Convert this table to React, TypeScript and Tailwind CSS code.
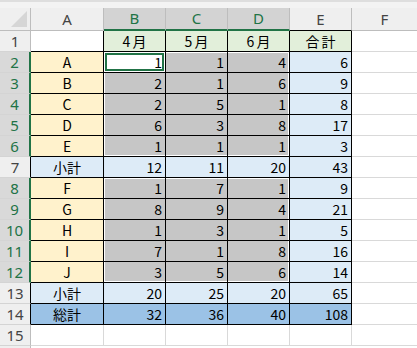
import React from "react";

const cols = ["A", "B", "C", "D", "E", "F"];
const selCols = ["B", "C", "D"];

type Row = { n: number; label: string; vals: (number | string)[]; kind: "head" | "item" | "sub" | "total" | "blank" };

const rows: Row[] = [
  { n: 1, label: "", vals: ["4月", "5月", "6月", "合計"], kind: "head" },
  { n: 2, label: "A", vals: [1, 1, 4, 6], kind: "item" },
  { n: 3, label: "B", vals: [2, 1, 6, 9], kind: "item" },
  { n: 4, label: "C", vals: [2, 5, 1, 8], kind: "item" },
  { n: 5, label: "D", vals: [6, 3, 8, 17], kind: "item" },
  { n: 6, label: "E", vals: [1, 1, 1, 3], kind: "item" },
  { n: 7, label: "小計", vals: [12, 11, 20, 43], kind: "sub" },
  { n: 8, label: "F", vals: [1, 7, 1, 9], kind: "item" },
  { n: 9, label: "G", vals: [8, 9, 4, 21], kind: "item" },
  { n: 10, label: "H", vals: [1, 3, 1, 5], kind: "item" },
  { n: 11, label: "I", vals: [7, 1, 8, 16], kind: "item" },
  { n: 12, label: "J", vals: [3, 5, 6, 14], kind: "item" },
  { n: 13, label: "小計", vals: [20, 25, 20, 65], kind: "sub" },
  { n: 14, label: "総計", vals: [32, 36, 40, 108], kind: "total" },
  { n: 15, label: "", vals: [], kind: "blank" },
];

// white inner edge of the selected ranges B2:D6 and B8:D12
const edge: Record<string, string> = {
  "L": "shadow-[inset_1px_0_0_#fff]",
  "LT": "shadow-[inset_1px_0_0_#fff,inset_0_1px_0_#fff]",
  "LB": "shadow-[inset_1px_0_0_#fff,inset_0_-1px_0_#fff]",
  "R": "shadow-[inset_-1px_0_0_#fff]",
  "RT": "shadow-[inset_-1px_0_0_#fff,inset_0_1px_0_#fff]",
  "RB": "shadow-[inset_-1px_0_0_#fff,inset_0_-1px_0_#fff]",
  "T": "shadow-[inset_0_1px_0_#fff]",
  "B": "shadow-[inset_0_-1px_0_#fff]",
  "": "",
};

const font = "font-['Noto_Sans_CJK_JP',sans-serif] text-[14px] leading-none";
const hdrFont = "font-['Noto_Sans','Liberation_Sans',sans-serif] text-[15px] leading-none";

function Cell({ r, ci }: { r: Row; ci: number }) {
  const col = cols[ci];
  if (r.kind === "blank" || col === "F") {
    return <div className={`h-[21px] border-b border-[#d9d9d9] ${col === "F" ? "" : "border-r"}`} />;
  }
  if (col === "A") {
    const bg = r.kind === "item" ? "bg-[#fff2cc]" : r.kind === "sub" ? "bg-[#ddebf7]" : r.kind === "total" ? "bg-[#9bc2e6]" : "bg-white";
    return (
      <div className={`h-[21px] border-r border-b border-black ${bg} ${font} flex items-center justify-center text-black`}>
        {r.label}
      </div>
    );
  }
  const v = r.vals[ci - 1];
  if (r.kind === "head") {
    return (
      <div className={`h-[21px] border-r border-b border-black bg-[#e2efda] ${font} flex items-center justify-center tracking-[2px] pl-[2px] text-black`}>
        {v}
      </div>
    );
  }
  let bg = "bg-[#ddebf7]";
  let sh = "";
  const selected = r.kind === "item" && selCols.includes(col);
  const active = r.n === 2 && col === "B";
  if (r.kind === "total") bg = "bg-[#9bc2e6]";
  if (selected) {
    bg = "bg-[#c6c6c6]";
    const side = col === "B" ? "L" : col === "D" ? "R" : "";
    const tb = r.n === 2 || r.n === 8 ? "T" : r.n === 6 || r.n === 12 ? "B" : "";
    sh = edge[side + tb];
  }
  if (active) {
    bg = "bg-white";
    sh = "shadow-[inset_0_0_0_1px_#fff,inset_0_0_0_3px_#217346]";
  }
  return (
    <div className={`h-[21px] border-r border-b border-black ${bg} ${sh} ${font} flex items-center justify-end pr-[3px] text-black`}>
      {v}
    </div>
  );
}

export default function App() {
  return (
    <div className="w-[417px] h-[348px] overflow-hidden bg-white select-none">
      <div className="h-[8px] bg-[#f3f3f3] border-t-2 border-[#dedede]" />
      <div className="grid grid-cols-[31px_73px_62px_62px_62px_62px_65px]">
        {/* corner */}
        <div className="h-[23px] bg-[#efefef] border-r border-b border-[#bdbdbd] flex items-end justify-end p-[3px]">
          <svg width="16" height="16" viewBox="0 0 16 16">
            <polygon points="16,0 16,16 0,16" fill="#d6d6d6" />
          </svg>
        </div>
        {cols.map((c) => {
          const sel = selCols.includes(c);
          return (
            <div
              key={c}
              className={`h-[23px] flex items-center justify-center ${hdrFont} ${
                sel
                  ? "bg-[#d3d3d3] text-[#217346] border-b-2 border-b-[#217346] border-r border-r-[#bdbdbd]"
                  : c === "E"
                  ? "bg-[#efefef] text-[#444] border-b border-b-black border-r border-r-[#bdbdbd]"
                  : "bg-[#efefef] text-[#444] border-b border-[#bdbdbd] " + (c === "F" ? "" : "border-r")
              }`}
            >
              {c}
            </div>
          );
        })}
        {rows.map((r) => {
          const sel = r.kind === "item";
          const dark = r.kind === "sub" || r.kind === "total";
          return (
            <React.Fragment key={r.n}>
              <div
                className={`h-[21px] flex items-center justify-center ${hdrFont} border-b border-b-[#d4d4d4] ${
                  sel
                    ? "bg-[#d9d9d9] text-[#217346] border-r-2 border-r-[#217346]"
                    : dark
                    ? "bg-[#efefef] text-[#444] border-r border-r-black"
                    : "bg-[#efefef] text-[#444] border-r border-r-[#bdbdbd]"
                }`}
              >
                {r.n}
              </div>
              {cols.map((c, ci) => (
                <Cell key={c} r={r} ci={ci} />
              ))}
            </React.Fragment>
          );
        })}
        <div className="h-[4px] bg-[#efefef] border-r border-[#bdbdbd]" />
      </div>
    </div>
  );
}
